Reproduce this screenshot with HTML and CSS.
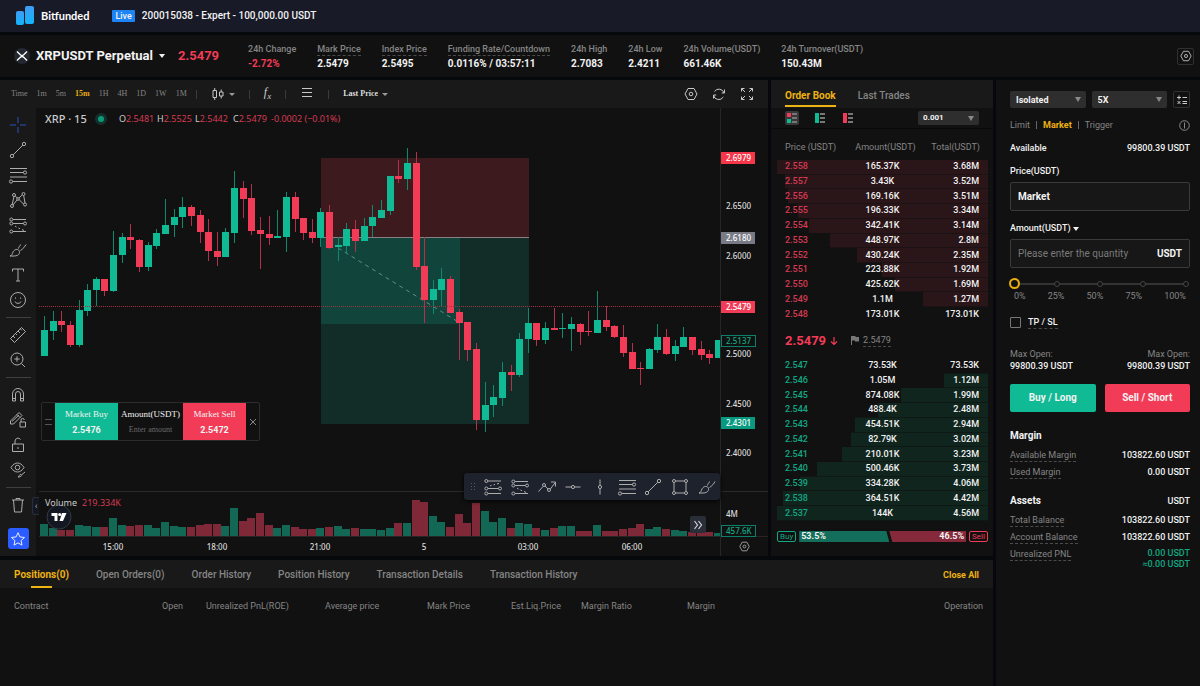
FILE: index.html
```html
<!DOCTYPE html>
<html lang="en">
<head>
    <meta charset="UTF-8">
    <title>Bitfunded - XRPUSDT Perpetual</title>
    <link rel="stylesheet" href="styles.css">
</head>
<body>
    <!-- shared icons -->
    <svg class="sprite" aria-hidden="true">
        <symbol id="i-cross" viewBox="0 0 20 20"><path d="M10 2v6M10 12v6M2 10h6M12 10h6"/></symbol>
        <symbol id="i-trend" viewBox="0 0 20 20"><path d="M5.200 14.800 14.800 5.200"/><circle cx="4" cy="16" r="1.700"/><circle cx="16" cy="4" r="1.700"/></symbol>
        <symbol id="i-fib" viewBox="0 0 20 20"><path d="M2 3.500h17M2 7.500h13.500M2 12h17M4.500 16.500H19"/><circle cx="17" cy="7.500" r="1.600"/><circle cx="3" cy="16.500" r="1.600"/></symbol>
        <symbol id="i-pattern" viewBox="0 0 20 20"><path d="M4.200 14.500 6 6.500M7.300 6l2 2M11 8l3-2.800M15.700 5.500 17 13M15.500 14l-4.500-4.500M9 10l-4 5"/><circle cx="4" cy="16" r="1.500"/><circle cx="6" cy="5" r="1.500"/><circle cx="10" cy="9" r="1.300"/><circle cx="15.500" cy="4" r="1.500"/><circle cx="17" cy="14.500" r="1.500"/></symbol>
        <symbol id="i-forecast" viewBox="0 0 20 20"><path d="M5 4.500h13M5 8.500h10.500M5 16.500h13M7 11l1.500 1M10.500 13l1.500.8M14 14.500l2 1" /><circle cx="3.300" cy="4.500" r="1.500"/><circle cx="3.300" cy="8.500" r="1.500"/><circle cx="3.300" cy="16.500" r="1.500"/><circle cx="17" cy="8.500" r="1.500"/></symbol>
        <symbol id="i-long" viewBox="0 0 20 20"><path d="M5 4h13M5 11.500h10.500M5 16.500h13M7 9l1.500-.7M10.500 8l1.500-.7M14 7l2-.7"/><circle cx="3.300" cy="4" r="1.500"/><circle cx="3.300" cy="11.500" r="1.500"/><circle cx="3.300" cy="16.500" r="1.500"/><circle cx="17" cy="11.500" r="1.500"/></symbol>
        <symbol id="i-brush" viewBox="0 0 20 20"><path d="M2 16c2-.5 2-2 3-4 1-2 3.500-3.500 5.500-2 2 1.700 1 4.300-1 5.300-2 1-5 .7-7.500.7zM10.500 8.500c.3-1.500 1.200-3 2.500-4M12.500 10.500c2.500-1.500 4.500-4 5.500-6"/></symbol>
        <symbol id="i-text" viewBox="0 0 20 20"><path d="M4.500 6.500V4h11v2.500M10 4v12M8 16h4"/></symbol>
        <symbol id="i-smile" viewBox="0 0 20 20"><circle cx="10" cy="10" r="7.500"/><path d="M7 11.500c.6 2.400 5.400 2.400 6 0M7.500 7.500v1.200M12.500 7.500v1.200"/></symbol>
        <symbol id="i-ruler" viewBox="0 0 20 20"><path d="M2.500 13.500 13.500 2.500l4 4L6.500 17.500zM5 11l2 2M7.500 8.500 9 10M10 6l2 2M12.300 3.800l1.500 1.500"/></symbol>
        <symbol id="i-zoom" viewBox="0 0 20 20"><circle cx="9" cy="9" r="6"/><path d="M13.500 13.500 17 17M9 6.300v5.400M6.300 9h5.400"/></symbol>
        <symbol id="i-magnet" viewBox="0 0 20 20"><path d="M4.500 16V9a5.500 5.500 0 0 1 11 0v7h-3V9a2.500 2.500 0 0 0-5 0v7zM4.500 13.500h3M12.500 13.500h3"/></symbol>
        <symbol id="i-pencil" viewBox="0 0 20 20"><path d="M2.500 14v-3L11 2.500l3 3L5.500 14zM9 4.500l3 3M4 11.500l7-6.500M12 12h5.500v5H12zM13 12v-2a1.600 1.600 0 0 1 3.200 0"/></symbol>
        <symbol id="i-lock" viewBox="0 0 20 20"><path d="M4.500 9h11v7.500h-11zM7 9V6a3 3 0 0 1 5.500-1.500M10 12v2"/></symbol>
        <symbol id="i-eye" viewBox="0 0 20 20"><path d="M3 7.500c3.500-6 9.500-6 13 0-3.500 6-9.500 6-13 0z"/><circle cx="9.500" cy="7.500" r="2.300"/><path d="M10 17c1.500-.4 1-2.500 2.800-2.700 1.700.2 1 2.700-2.800 2.700zM14 14.500l3-2.500"/></symbol>
        <symbol id="i-trash" viewBox="0 0 20 20"><path d="M4 5h12M8 5V3.500h4V5M5.500 5l1 12h7l1-12"/></symbol>
        <symbol id="i-star" viewBox="0 0 20 20"><path d="m10 3 2.100 4.700 5.100.6-3.800 3.500 1 5-4.400-2.500-4.400 2.500 1-5-3.800-3.500 5.100-.6z"/></symbol>
        <symbol id="i-zigzag" viewBox="0 0 20 20"><path d="m1.500 14.500 4.500-5M8 9l3 3M13.300 12 18 6M14 5h4.500v4.500"/><circle cx="7" cy="8" r="1.500"/><circle cx="12" cy="13" r="1.500"/></symbol>
        <symbol id="i-hline" viewBox="0 0 20 20"><path d="M2.500 10H8M12 10h5.500"/><circle cx="10" cy="10" r="1.600"/></symbol>
        <symbol id="i-vline" viewBox="0 0 20 20"><path d="M10 2.500V8M10 12v5.500"/><circle cx="10" cy="10" r="1.600"/></symbol>
        <symbol id="i-rect" viewBox="0 0 20 20"><path d="M5.500 4h9M5.500 16h9M4 5.500v9M16 5.500v9"/><circle cx="4" cy="4" r="1.500"/><circle cx="16" cy="4" r="1.500"/><circle cx="4" cy="16" r="1.500"/><circle cx="16" cy="16" r="1.500"/></symbol>
        <symbol id="i-hex" viewBox="0 0 14 14"><path d="M4 1.500h6L13 7l-3 5.500H4L1 7z"/><circle cx="7" cy="7" r="1.800"/></symbol>
        <symbol id="i-refresh" viewBox="0 0 14 14"><path d="M2.500 4.500A5.300 5.300 0 0 1 12 6M1.500 8a5.300 5.300 0 0 0 9.800 2M12.500 2.500V6H9.800M1.500 11.500V8h2.700"/></symbol>
        <symbol id="i-full" viewBox="0 0 14 14"><path d="M1.500 4.500v-3h3M1.500 1.500 5 5M9.500 1.500h3v3M12.500 1.500 9 5M12.500 9.500v3h-3M12.500 12.500 9 9M4.500 12.500h-3v-3M1.500 12.500 5 9"/></symbol>
        <symbol id="i-candles" viewBox="0 0 14 14"><path d="M2 3.500h3.500v7H2zM3.700 1v2.500M3.700 10.500V13M8.500 5H12v4H8.500zM10.200 2.500V5M10.200 9v2.500"/></symbol>
        <symbol id="i-menu" viewBox="0 0 14 14"><path d="M2 1.500h10M2 5.500h10M2 9.500h10"/></symbol>
        <symbol id="i-close" viewBox="0 0 14 14"><path d="m4 4 6 6M10 4l-6 6"/></symbol>
    </svg>

    <header class="topbar">
        <a class="brand" href="#">
            <svg width="20" height="22" viewBox="0 0 20 22">
                <defs>
                    <linearGradient id="logo" x1="0" y1="0" x2="0" y2="1">
                        <stop offset="0" stop-color="#3f9cf5"/>
                        <stop offset="1" stop-color="#12b4fb"/>
                    </linearGradient>
                </defs>
                <rect x="1" y="6" width="8" height="14" rx="2" fill="url(#logo)"/>
                <rect x="10" y="1" width="9" height="18" rx="2" fill="url(#logo)"/>
            </svg>
            Bitfunded
        </a>
        <span class="live">Live</span>
        <span class="account">200015038 - Expert - 100,000.00 USDT</span>
    </header>

    <section class="symbolbar">
        <button class="symbol">
            <svg width="16" height="16" viewBox="0 0 16 16">
                <circle cx="8" cy="8" r="8" fill="#23272f"/>
                <path d="M3 3.500 6.300 6.800q1.700 1.500 3.400 0L13 3.500M3 12.500l3.300-3.300q1.700-1.500 3.400 0L13 12.500" fill="none" stroke="#fff" stroke-width="1.300"/>
            </svg>
            XRPUSDT Perpetual
            <i class="caret"></i>
        </button>
        <strong class="last">2.5479</strong>
        <dl class="stats">
            <div><dt>24h Change</dt><dd class="down">-2.72%</dd></div>
            <div><dt class="hint">Mark Price</dt><dd>2.5479</dd></div>
            <div><dt class="hint">Index Price</dt><dd>2.5495</dd></div>
            <div><dt class="hint">Funding Rate/Countdown</dt><dd>0.0116% / 03:57:11</dd></div>
            <div><dt>24h High</dt><dd>2.7083</dd></div>
            <div><dt>24h Low</dt><dd>2.4211</dd></div>
            <div><dt>24h Volume(USDT)</dt><dd>661.46K</dd></div>
            <div><dt>24h Turnover(USDT)</dt><dd>150.43M</dd></div>
        </dl>
        <button class="box-btn" aria-label="Settings"><svg class="icon12"><use href="#i-hex"/></svg></button>
    </section>

    <main class="layout">
        <section class="chart">
            <div class="chart-bar">
                <span>Time</span>
                <button>1m</button>
                <button>5m</button>
                <button class="active">15m</button>
                <button>1H</button>
                <button>4H</button>
                <button>1D</button>
                <button>1W</button>
                <button>1M</button>
                <i class="sep"></i>
                <button class="tool" aria-label="Chart type"><svg class="icon14"><use href="#i-candles"/></svg><i class="caret small"></i></button>
                <i class="sep"></i>
                <button class="tool fx" aria-label="Indicators"><span>f<sub>x</sub></span></button>
                <i class="sep"></i>
                <button class="tool" aria-label="Menu"><svg class="icon14"><use href="#i-menu"/></svg></button>
                <i class="sep"></i>
                <button class="tool price-type">Last Price <i class="caret small"></i></button>
                <div class="chart-actions">
                    <button aria-label="Chart settings"><svg class="icon14"><use href="#i-hex"/></svg></button>
                    <button aria-label="Refresh"><svg class="icon14"><use href="#i-refresh"/></svg></button>
                    <button aria-label="Full screen"><svg class="icon14"><use href="#i-full"/></svg></button>
                </div>
            </div>
            <div class="chart-body">
                <nav class="tools">
                    <button class="current" aria-label="Cross"><svg><use href="#i-cross"/></svg></button>
                    <button aria-label="Trend line"><svg><use href="#i-trend"/></svg></button>
                    <button aria-label="Fib retracement"><svg><use href="#i-fib"/></svg></button>
                    <button aria-label="Pattern"><svg><use href="#i-pattern"/></svg></button>
                    <button aria-label="Forecast"><svg><use href="#i-forecast"/></svg></button>
                    <button aria-label="Brush"><svg><use href="#i-brush"/></svg></button>
                    <button aria-label="Text"><svg><use href="#i-text"/></svg></button>
                    <button aria-label="Icons"><svg><use href="#i-smile"/></svg></button>
                    <hr>
                    <button aria-label="Measure"><svg><use href="#i-ruler"/></svg></button>
                    <button aria-label="Zoom in"><svg><use href="#i-zoom"/></svg></button>
                    <hr>
                    <button aria-label="Magnet"><svg><use href="#i-magnet"/></svg></button>
                    <button aria-label="Stay in drawing mode"><svg><use href="#i-pencil"/></svg></button>
                    <button aria-label="Lock drawings"><svg><use href="#i-lock"/></svg></button>
                    <button aria-label="Hide drawings"><svg><use href="#i-eye"/></svg></button>
                    <hr>
                    <button aria-label="Remove"><svg><use href="#i-trash"/></svg></button>
                    <button class="fav" aria-label="Favorites"><svg><use href="#i-star"/></svg></button>
                </nav>
                <div class="plot">
                    <svg id="plot" class="plot-svg" viewBox="39 108 729 448"></svg>

                    <div class="legend">
                        <b>XRP · 15</b>
                        <i class="status"></i>
                        <span>O<em>2.5481</em></span>
                        <span>H<em>2.5525</em></span>
                        <span>L<em>2.5442</em></span>
                        <span>C<em>2.5479</em></span>
                        <em>-0.0002 (−0.01%)</em>
                    </div>

                    <div class="quick">
                        <i class="grip"></i>
                        <button class="buy">Market Buy<b>2.5476</b></button>
                        <label>Amount(USDT)<input type="text" placeholder="Enter amount"></label>
                        <button class="sell">Market Sell<b>2.5472</b></button>
                        <button class="close" aria-label="Close"><svg class="icon14"><use href="#i-close"/></svg></button>
                    </div>

                    <a class="tv" href="#" aria-label="TradingView">
                        <svg width="26" height="26" viewBox="0 0 26 26">
                            <circle cx="13" cy="13" r="12" fill="#131722" stroke="#353945"/>
                            <path d="M5.500 9h6v8H8.500v-5h-3zM16 9h4.500L17 17h-3.500z" fill="#fff"/>
                            <circle cx="13.700" cy="10.500" r="1.500" fill="#fff"/>
                        </svg>
                    </a>
                    <div class="vol-legend">Volume <em>219.334K</em></div>
                    <button class="collapse" aria-label="Hide tools">‹</button>
                    <button class="scroll-end" aria-label="Scroll to last bar">
                        <svg width="10" height="10" viewBox="0 0 10 10"><path d="m1.500 1 3 4-3 4M5.500 1l3 4-3 4" fill="none" stroke="#d1d4dc" stroke-width="1.200"/></svg>
                    </button>

                    <div class="floating">
                        <i class="dots"></i>
                        <button aria-label="Long position"><svg><use href="#i-long"/></svg></button>
                        <button aria-label="Short position"><svg><use href="#i-forecast"/></svg></button>
                        <button aria-label="Path"><svg><use href="#i-zigzag"/></svg></button>
                        <button aria-label="Horizontal line"><svg><use href="#i-hline"/></svg></button>
                        <button aria-label="Vertical line"><svg><use href="#i-vline"/></svg></button>
                        <button aria-label="Fib retracement"><svg><use href="#i-fib"/></svg></button>
                        <button aria-label="Trend line"><svg><use href="#i-trend"/></svg></button>
                        <button aria-label="Rectangle"><svg><use href="#i-rect"/></svg></button>
                        <button aria-label="Brush"><svg><use href="#i-brush"/></svg></button>
                    </div>
                </div>
            </div>
        </section>

        <section class="book">
            <div class="book-tabs">
                <button class="active">Order Book</button>
                <button>Last Trades</button>
            </div>
            <div class="book-filter">
                <button class="active" aria-label="Both sides"><svg width="12" height="12" viewBox="0 0 12 12"><path fill="#f23c57" d="M1 1h4v4H1z"/><path fill="#0fba94" d="M1 7h4v4H1z"/><path fill="#777" d="M6 1h5v2H6zM6 5h5v2H6zM6 9h5v2H6z"/></svg></button>
                <button aria-label="Bids only"><svg width="12" height="12" viewBox="0 0 12 12"><path fill="#0fba94" d="M1 1h4v10H1z"/><path fill="#777" d="M6 1h5v2H6zM6 5h5v2H6zM6 9h5v2H6z"/></svg></button>
                <button aria-label="Asks only"><svg width="12" height="12" viewBox="0 0 12 12"><path fill="#f23c57" d="M1 1h4v10H1z"/><path fill="#777" d="M6 1h5v2H6zM6 5h5v2H6zM6 9h5v2H6z"/></svg></button>
                <select class="select" aria-label="Price step"><option>0.001</option></select>
            </div>
            <table class="depth asks">
                <thead>
                    <tr><th>Price (USDT)</th><th>Amount(USDT)</th><th>Total(USDT)</th></tr>
                </thead>
                <tbody id="asks"></tbody>
            </table>
            <div class="mid">
                <strong>2.5479</strong>
                <svg width="8" height="10" viewBox="0 0 8 10"><path d="M4 1v7.500M1 5.500l3 3 3-3" fill="none" stroke="#f23c57" stroke-width="1.200"/></svg>
                <svg class="flag" width="8" height="9" viewBox="0 0 8 9"><path d="M0 0h4.500v1H8v4.500H4v-1H1V9H0z" fill="#777"/></svg>
                <span class="hint">2.5479</span>
            </div>
            <table class="depth bids">
                <tbody id="bids"></tbody>
            </table>
            <div class="ratio">
                <span class="tag up">Buy</span>
                <div class="ratio-bar">
                    <b class="ratio-buy">53.5%</b>
                    <b class="ratio-sell">46.5%</b>
                </div>
                <span class="tag down">Sell</span>
            </div>
        </section>

        <aside class="trade">
            <div class="trade-mode">
                <select class="select" aria-label="Margin mode"><option>Isolated</option></select>
                <select class="select" aria-label="Leverage"><option>5X</option></select>
                <button class="box-btn" aria-label="Calculator"><svg width="10" height="10" viewBox="0 0 10 10"><path d="M0 2.500h4M2 .5v4M5.500 2.500H10M.5 6l3 3M3.500 6l-3 3M5.500 6.500H10M5.500 8.500H10" fill="none" stroke="#ccc"/></svg></button>
            </div>
            <div class="order-type">
                <button>Limit</button><i></i><button class="active">Market</button><i></i><button>Trigger</button>
                <svg width="11" height="11" viewBox="0 0 11 11"><circle cx="5.500" cy="5.500" r="4.800" fill="none" stroke="#888"/><path d="M5.500 2.500v6" stroke="#888"/></svg>
            </div>
            <div class="line available"><b>Available</b><b>99800.39 USDT</b></div>

            <label class="field-label" for="price">Price(USDT)</label>
            <div class="field"><input id="price" class="market" type="text" value="Market"></div>

            <label class="field-label" for="amount">Amount(USDT) <i class="caret"></i></label>
            <div class="field"><input id="amount" type="text" placeholder="Please enter the quantity"><b>USDT</b></div>

            <div class="slider">
                <div class="ticks"><i></i><i></i><i></i><i></i><i></i></div>
                <input type="range" min="0" max="100" value="0" aria-label="Amount percent">
            </div>
            <div class="scale"><span>0%</span><span>25%</span><span>50%</span><span>75%</span><span>100%</span></div>

            <label class="tpsl"><input type="checkbox"><span class="hint">TP / SL</span></label>

            <div class="line max"><span>Max Open:<b>99800.39 USDT</b></span><span>Max Open:<b>99800.39 USDT</b></span></div>
            <div class="submit">
                <button class="buy">Buy / Long</button>
                <button class="sell">Sell / Short</button>
            </div>

            <div class="line title"><h2>Margin</h2></div>
            <div class="line"><span class="hint">Available Margin</span><b>103822.60 USDT</b></div>
            <div class="line"><span class="hint">Used Margin</span><b>0.00 USDT</b></div>

            <div class="line title"><h2>Assets</h2><b>USDT</b></div>
            <div class="line"><span class="hint">Total Balance</span><b>103822.60 USDT</b></div>
            <div class="line"><span class="hint">Account Balance</span><b>103822.60 USDT</b></div>
            <div class="line pnl"><span class="hint">Unrealized PNL</span><b class="up">0.00 USDT<br>≈0.00 USDT</b></div>
        </aside>

        <section class="positions">
            <div class="pos-tabs">
                <button class="active">Positions(0)</button>
                <button>Open Orders(0)</button>
                <button>Order History</button>
                <button>Position History</button>
                <button>Transaction Details</button>
                <button>Transaction History</button>
                <button class="close-all">Close All</button>
            </div>
            <table class="pos-table">
                <thead>
                    <tr>
                        <th>Contract</th>
                        <th>Open</th>
                        <th>Unrealized PnL(ROE)</th>
                        <th>Average price</th>
                        <th>Mark Price</th>
                        <th>Est.Liq.Price</th>
                        <th>Margin Ratio</th>
                        <th>Margin</th>
                        <th>Operation</th>
                    </tr>
                </thead>
            </table>
        </section>
    </main>

    <script src="chart.js"></script>
</body>
</html>
```

FILE: styles.css
```css
* {
    box-sizing: border-box;
}
body {
    margin: 0;
    min-height: 100vh;
    display: flex;
    flex-direction: column;
    gap: 3px;
    background: #07080c;
    color: #f2f2f2;
    font-family: Roboto, "Liberation Sans", sans-serif;
    font-size: 9px;
    line-height: 12px;
}
button, input, select {
    font: inherit;
    color: inherit;
    background: none;
    border: 0;
    padding: 0;
    margin: 0;
}
button {
    cursor: pointer;
    white-space: nowrap;
}
svg {
    display: block;
}
em {
    font-style: normal;
}
.sprite {
    position: absolute;
    width: 0;
    height: 0;
}
.icon12, .icon14, .tools svg, .floating svg {
    fill: none;
    stroke: #c8c8c8;
}
.icon12 {
    width: 12px;
    height: 12px;
}
.icon14 {
    width: 14px;
    height: 14px;
}
.up {
    color: #12a883;
}
.down {
    color: #f23c57;
}
.hint {
    border-bottom: 1px dashed #4a4a4a;
}
.caret {
    display: inline-block;
    border: 3px solid transparent;
    border-top: 4px solid currentColor;
    border-bottom: 0;
}
.caret.small {
    border-width: 3px 3px 0;
    color: #999;
}
.box-btn {
    display: grid;
    place-items: center;
    width: 17px;
    height: 17px;
    border: 1px solid #303030;
    border-radius: 2px;
}

/* header */
.topbar {
    height: 32px;
    flex: none;
    display: flex;
    align-items: center;
    padding: 0 15px;
    background: #181a28;
    font-size: 10px;
    font-weight: 500;
}
.brand {
    display: flex;
    align-items: center;
    gap: 6px;
    margin-right: 23px;
    color: #fff;
    font-family: Lato, sans-serif;
    font-size: 11px;
    font-weight: 700;
    text-decoration: none;
}
.live {
    padding: 0 3px;
    margin-right: 7px;
    background: #1c84f5;
    border-radius: 1px;
    font-size: 9px;
}
.symbolbar {
    height: 42px;
    flex: none;
    display: flex;
    align-items: center;
    padding: 0 6px 0 14px;
    background: #111;
}
.symbol {
    display: flex;
    align-items: center;
    gap: 6px;
    font-size: 13px;
    font-weight: 700;
}
.last {
    margin: 0 29px 0 13px;
    color: #f23c57;
    font-size: 13px;
}
.stats {
    display: flex;
    gap: 21px;
    flex: 1;
    margin: 0;
    white-space: nowrap;
}
.stats dt {
    height: 13px;
    color: #858585;
    font-weight: 500;
}
.stats dd {
    margin: 2px 0 0;
    font-size: 10px;
    font-weight: 700;
}

.layout {
    flex: 1;
    display: grid;
    grid-template: auto 1fr / 1fr 222px 204px;
    gap: 4px 3px;
}

/* chart */
.chart {
    background: #111;
    min-width: 0;
}
.chart-bar {
    display: flex;
    align-items: center;
    gap: 9px;
    height: 28px;
    padding: 0 14px 0 11px;
    background: #191919;
    color: #858585;
    font-family: "Liberation Serif", serif;
    font-size: 8px;
}
.chart-bar .active {
    color: #e9ae10;
    font-weight: 700;
}
.sep {
    width: 1px;
    height: 9px;
    background: #3a3a3a;
}
.tool {
    display: flex;
    align-items: center;
    gap: 4px;
    margin: 0 5px;
}
.fx {
    color: #ccc;
    font-size: 12px;
    font-style: italic;
}
.fx sub {
    font-size: 9px;
}
.price-type {
    color: #ddd;
    font-weight: 700;
}
.chart-actions {
    display: flex;
    gap: 14px;
    margin-left: auto;
}
.chart-body {
    display: flex;
}
.tools {
    display: flex;
    flex-direction: column;
    align-items: center;
    width: 36px;
    margin-right: 3px;
    padding-top: 4px;
    background: #191919;
}
.tools button {
    width: 28px;
    height: 25px;
    display: grid;
    place-items: center;
}
.tools svg, .floating svg {
    width: 20px;
    height: 20px;
    stroke: #adadad;
}
.tools hr {
    width: 25px;
    height: 1px;
    margin: 5px 0 4px;
    border: 0;
    background: #3f3f42;
}
.tools .current svg {
    stroke: #2c4fc4;
}
.tools .fav {
    width: 21px;
    height: 21px;
    margin-top: 11px;
    border-radius: 3px;
    background: #2b5cff;
}
.tools .fav svg {
    width: 18px;
    stroke: #fff;
}
.plot {
    position: relative;
    flex: 1;
    min-width: 0;
}
.plot-svg {
    width: 100%;
    height: 448px;
    font-family: "Noto Sans", sans-serif;
    font-size: 8px;
    font-weight: 500;
    fill: #dcdcdc;
}
.legend, .vol-legend {
    position: absolute;
    left: 6px;
    display: flex;
    align-items: center;
    font-family: "Noto Sans", sans-serif;
    font-size: 9px;
    color: #ccc;
    white-space: nowrap;
}
.legend {
    top: 5px;
}
.legend b {
    font-size: 11px;
    font-weight: 500;
    width: 50px;
}
.legend span {
    width: 38px;
}
.legend em, .vol-legend em {
    color: #d53a52;
}
.status {
    width: 12px;
    height: 12px;
    margin-right: 12px;
    border: 3px solid #14302a;
    border-radius: 50%;
    background: #0c9a7b;
}
.vol-legend {
    top: 389px;
    gap: 5px;
}
.quick {
    position: absolute;
    left: 2px;
    top: 294px;
    display: flex;
    height: 39px;
    border: 1px solid #2c2c2c;
    border-radius: 2px;
    background: #111;
    font-family: "Liberation Serif", serif;
}
.quick > * {
    display: flex;
    flex-direction: column;
    align-items: center;
    justify-content: center;
    gap: 4px;
    width: 63px;
    text-align: center;
}
.quick b {
    font-family: Roboto, sans-serif;
}
.quick label {
    width: 65px;
}
.quick input {
    width: 100%;
    height: 12px;
    text-align: center;
    font-size: 8px;
}
.quick ::placeholder {
    color: #6a6a6a;
}
.quick .grip, .quick .close {
    width: 13px;
}
.grip::before {
    content: "";
    width: 7px;
    height: 4px;
    border: solid #555;
    border-width: 1px 0;
}
.quick .close svg {
    stroke: #888;
}
.buy {
    background: #0fba94;
}
.sell {
    background: #f23c57;
}
.tv {
    position: absolute;
    left: 7px;
    top: 396px;
}
.collapse {
    position: absolute;
    left: -7px;
    top: 389px;
    width: 7px;
    height: 18px;
    border: 1px solid #2a2e39;
    border-right: 0;
    border-radius: 3px 0 0 3px;
    background: #131722;
    color: #aaa;
}
.scroll-end {
    position: absolute;
    right: 62px;
    top: 408px;
    width: 16px;
    height: 17px;
    display: grid;
    place-items: center;
    border-radius: 2px;
    background: #2a2e39;
}
.floating {
    position: absolute;
    right: 48px;
    top: 365px;
    width: 256px;
    height: 27px;
    display: flex;
    align-items: center;
    border-radius: 3px;
    background: #1e222d;
    box-shadow: 0 1px 4px #000;
}
.floating button {
    flex: 1;
    display: grid;
    place-items: center;
}
.dots {
    width: 6px;
    height: 10px;
    margin: 0 4px 0 6px;
    background: radial-gradient(circle, #555a66 1px, transparent 1px) 0 0 / 3px 3px;
}

/* order book */
.book {
    padding-bottom: 14px;
    background: #111;
}
.book-tabs {
    display: flex;
    gap: 22px;
    height: 28px;
    padding: 5px 14px 0;
    background: #191919;
    color: #858585;
    font-size: 10px;
    font-weight: 500;
}
.book-tabs button {
    height: 22px;
    padding-top: 2px;
    border-bottom: 2px solid transparent;
}
.book-tabs .active, .pos-tabs .active {
    color: #eeb211;
    border-color: #eeb211;
    font-weight: 700;
}
.book-filter {
    display: flex;
    align-items: center;
    gap: 14px;
    height: 21px;
    padding: 0 14px;
    border-bottom: 1px solid #090909;
}
.book-filter button {
    padding: 1px;
}
.book-filter .active {
    background: #383838;
    border-radius: 2px;
}
.select {
    appearance: none;
    height: 17px;
    padding: 0 6px;
    border-radius: 2px;
    background: #2e2e2e url("data:image/svg+xml,%3Csvg xmlns='http://www.w3.org/2000/svg' width='6' height='5'%3E%3Cpath d='M0 0h6L3 5z' fill='%23888'/%3E%3C/svg%3E") no-repeat right 5px center;
    font-weight: 700;
}
.book-filter .select {
    width: 61px;
    height: 14px;
    margin-left: auto;
    padding: 0 5px;
    font-size: 8px;
}
.depth {
    width: 211px;
    margin: 6px 0 0 6px;
    table-layout: fixed;
    border-collapse: collapse;
    font-weight: 500;
}
.depth.asks {
    height: 187px;
}
.depth.bids {
    height: 162px;
    margin-top: 0;
}
.depth th {
    height: 25px;
    padding: 0 8px 1px;
    color: #858585;
    font-weight: 400;
    white-space: nowrap;
}
.depth td {
    padding: 0 9px;
    line-height: 11px;
    text-align: center;
    border-bottom: 1px solid rgba(17, 17, 17, 0.6);
}
.depth th:first-child, .depth td:first-child {
    padding-left: 8px;
    text-align: left;
}
.depth th:last-child, .depth td:last-child {
    text-align: right;
}
.asks tbody tr {
    background: linear-gradient(to left, #2a1519 var(--depth), transparent var(--depth));
}
.bids tbody tr {
    background: linear-gradient(to left, #11251f var(--depth), transparent var(--depth));
}
.asks td:first-child {
    color: #d53a52;
}
.bids td:first-child {
    color: #12a883;
}
.mid {
    display: flex;
    align-items: center;
    gap: 4px;
    height: 37px;
    padding: 0 14px;
    color: #858585;
}
.mid strong {
    color: #f23c57;
    font-size: 13px;
}
.mid .flag {
    margin-left: 9px;
}
.ratio {
    display: flex;
    align-items: center;
    gap: 3px;
    margin: 10px 5px 0 6px;
}
.tag {
    padding: 0 2px;
    border: 1px solid;
    border-radius: 2px;
    font-size: 8px;
    line-height: 9px;
}
.ratio-bar {
    flex: 1;
    display: flex;
    line-height: 11px;
}
.ratio-buy {
    width: 54%;
    padding-left: 2px;
    background: #136f5b;
    clip-path: polygon(0 0, calc(100% - 3px) 0, 100% 100%, 0 100%);
}
.ratio-sell {
    flex: 1;
    padding-right: 2px;
    background: #86293a;
    text-align: right;
    clip-path: polygon(0 0, 100% 0, 100% 100%, 3px 100%);
}

/* order form */
.trade {
    grid-row: span 2;
    padding: 11px 10px 0 14px;
    background: #111;
}
.trade-mode {
    display: flex;
    gap: 6px;
}
.trade-mode .select {
    flex: 1;
    min-width: 0;
}
.order-type {
    display: flex;
    align-items: center;
    gap: 6px;
    height: 34px;
    color: #858585;
}
.order-type i {
    width: 1px;
    height: 8px;
    background: #666;
}
.order-type .active {
    color: #eeb211;
    font-weight: 700;
}
.order-type svg {
    margin-left: auto;
}
.line {
    display: flex;
    justify-content: space-between;
    height: 17px;
    color: #858585;
}
.line b {
    color: #f2f2f2;
    font-weight: 500;
    text-align: right;
}
.line .hint {
    height: 13px;
}
.line b.up {
    color: #12a883;
    line-height: 11px;
}
.available {
    height: 23px;
}
.field-label {
    display: block;
    height: 17px;
    font-weight: 500;
}
.field {
    display: flex;
    align-items: center;
    height: 29px;
    margin-bottom: 11px;
    padding: 0 7px;
    border: 1px solid #3a3a3a;
    border-radius: 2px;
    background: #171717;
    font-size: 10px;
}
.field input {
    flex: 1;
    min-width: 0;
    height: 100%;
    outline: 0;
}
.field ::placeholder {
    color: #7a7a7a;
}
.field .market {
    font-weight: 700;
}
.slider {
    display: grid;
    align-items: center;
    height: 11px;
    margin: -1px 0 0 -1px;
}
.slider > * {
    grid-area: 1 / 1;
}
.ticks {
    display: flex;
    justify-content: space-between;
    margin: 0 1px 0 2px;
    background: linear-gradient(#333, #333) center / 100% 2px no-repeat;
}
.ticks i {
    width: 6px;
    height: 6px;
    border: 1px solid #444;
    border-radius: 50%;
    background: #111;
}
.slider input {
    appearance: none;
    width: 100%;
    height: 11px;
}
.slider input::-webkit-slider-thumb {
    appearance: none;
    width: 11px;
    height: 11px;
    border: 2px solid #e9ae10;
    border-radius: 50%;
    background: #111;
}
.scale {
    display: flex;
    justify-content: space-between;
    margin: 1px 4px 14px;
    color: #858585;
}
.tpsl {
    display: flex;
    align-items: center;
    gap: 7px;
    margin-bottom: 19px;
    font-weight: 500;
}
.tpsl input {
    appearance: none;
    width: 11px;
    height: 11px;
    border: 1px solid #777;
    border-radius: 1px;
}
.max {
    height: 36px;
}
.max span:last-child {
    text-align: right;
}
.max b {
    display: block;
}
.submit {
    display: flex;
    gap: 9px;
    margin-bottom: 18px;
}
.submit button {
    flex: 1;
    height: 28px;
    border-radius: 2px;
    font-size: 10px;
    font-weight: 700;
}
.title {
    height: 19px;
}
.line + .title {
    margin-top: 12px;
}
.title h2 {
    margin: 0;
    color: #f2f2f2;
    font-size: 10px;
}

/* positions */
.positions {
    grid-column: span 2;
    background: #111;
}
.pos-tabs {
    display: flex;
    gap: 27px;
    height: 28px;
    padding: 0 14px;
    background: #191919;
    color: #858585;
    font-weight: 500;
}
.pos-tabs button {
    position: relative;
    padding-top: 1px;
    font-size: 10px;
}
.pos-tabs .active::after {
    content: "";
    position: absolute;
    left: 17px;
    right: 17px;
    bottom: 0;
    height: 2px;
    background: #eeb211;
}
.pos-tabs .close-all {
    margin-left: auto;
    color: #eeb211;
    font-size: 9px;
    font-weight: 700;
}
.pos-table {
    width: 100%;
    table-layout: fixed;
    border-collapse: collapse;
}
.pos-table th {
    height: 35px;
    padding: 0;
    color: #858585;
    font-weight: 400;
    text-align: left;
    white-space: nowrap;
}
.pos-table th:nth-child(1) {
    width: 162px;
    padding-left: 14px;
}
.pos-table th:nth-child(2) {
    width: 44px;
}
.pos-table th:nth-child(3) {
    width: 119px;
}
.pos-table th:nth-child(4) {
    width: 102px;
}
.pos-table th:nth-child(5) {
    width: 84px;
}
.pos-table th:nth-child(6) {
    width: 70px;
}
.pos-table th:nth-child(7) {
    width: 106px;
}
.pos-table th:last-child {
    padding-right: 10px;
    text-align: right;
}
```

FILE: chart.js
```js
// candle: [body top, body bottom, wick top, wick bottom, volume, rising]
const candles = [
    [330, 356, 316, 356, 12, 1], [321, 331, 311, 340, 8, 1], [321, 325, 311, 332, 6, 0], [325, 345, 321, 347, 6, 0],
    [310, 345, 300, 347, 11, 1], [290, 311, 284, 316, 10, 1], [279, 290, 277, 306, 9, 1], [279, 291, 279, 296, 9, 0],
    [255, 291, 231, 292, 18, 1], [237, 255, 233, 263, 11, 1], [237, 240, 224, 249, 10, 0], [240, 267, 239, 272, 11, 0],
    [245, 267, 242, 271, 11, 1], [233, 246, 229, 249, 8, 1], [225, 234, 199, 234, 14, 1], [217, 225, 209, 237, 10, 1],
    [207, 217, 197, 228, 9, 1], [207, 216, 205, 226, 9, 0], [215, 232, 210, 243, 11, 0], [232, 251, 219, 261, 12, 0],
    [251, 257, 232, 266, 12, 0], [232, 257, 228, 257, 10, 1], [188, 233, 171, 243, 28, 1], [188, 199, 181, 218, 15, 0],
    [198, 231, 184, 235, 18, 0], [230, 234, 217, 269, 23, 0], [234, 238, 216, 245, 11, 0], [236, 238, 210, 238, 8, 1],
    [197, 237, 192, 252, 11, 1], [197, 219, 192, 232, 9, 0], [218, 233, 218, 240, 7, 0], [232, 238, 219, 243, 7, 0],
    [212, 238, 208, 247, 8, 1], [212, 248, 205, 249, 9, 0], [245, 247, 237, 261, 10, 1], [229, 246, 223, 254, 7, 1],
    [229, 241, 220, 252, 8, 0], [226, 241, 218, 241, 7, 1], [217, 226, 205, 237, 7, 1], [210, 218, 200, 218, 6, 1],
    [176, 211, 176, 215, 8, 1], [176, 179, 160, 183, 13, 0], [163, 179, 148, 190, 13, 1], [163, 267, 152, 270, 36, 0],
    [266, 300, 237, 323, 34, 0], [289, 300, 280, 314, 20, 1], [279, 290, 268, 306, 14, 1], [279, 313, 276, 313, 9, 0],
    [312, 323, 309, 360, 22, 0], [322, 350, 322, 361, 13, 0], [349, 420, 343, 430, 33, 0], [405, 420, 382, 432, 25, 1],
    [397, 405, 385, 417, 14, 1], [372, 398, 362, 406, 18, 1], [372, 375, 365, 391, 8, 0], [339, 375, 333, 377, 13, 1],
    [323, 339, 308, 353, 12, 1], [323, 340, 323, 346, 8, 0], [328, 340, 322, 344, 6, 1], [328, 330, 308, 330, 8, 0],
    [328, 329, 313, 338, 10, 1], [324, 329, 317, 351, 10, 1], [324, 332, 323, 345, 5, 0], [331, 332, 311, 336, 5, 0],
    [320, 333, 291, 333, 11, 1], [320, 327, 306, 331, 5, 0], [326, 337, 325, 338, 5, 0], [337, 353, 325, 357, 7, 0],
    [352, 369, 343, 369, 8, 0], [368, 369, 362, 385, 12, 0], [349, 369, 348, 369, 7, 1], [337, 350, 324, 353, 9, 1],
    [337, 354, 329, 355, 7, 0], [346, 354, 340, 361, 6, 1], [337, 347, 327, 347, 5, 1], [337, 350, 337, 355, 4, 0],
    [349, 355, 341, 360, 4, 0], [354, 358, 350, 364, 4, 0], [340, 358, 340, 358, 3, 1]
];

const rect = (x, y, w, h, fill) => `<rect x="${x}" y="${y}" width="${w}" height="${h}" fill="${fill}"/>`;
const text = (x, y, label, extra = '') => `<text x="${x}" y="${y}" ${extra}>${label}</text>`;

let out = '';

// short position
out += rect(321, 158, 208, 80, '#3c1a1d');
out += rect(321, 238, 208, 186, '#122d28');
out += rect(321, 238, 139, 86, '#11453b');
out += rect(321, 237, 208, 1, '#8a7f82');
out += '<path d="M338 248 460 323" stroke="#5f8f85" stroke-dasharray="4 4" fill="none"/>';

candles.forEach(([top, bottom, high, low, volume, rising], i) => {
    const x = Math.round(44 + i * 8.64);
    const w = x + 4 > 721 ? 5 : 7;
    const color = rising ? '#0fba94' : '#f23c57';
    out += rect(x, high, 1, low - high, rising ? '#0b8a6f' : '#b5304a');
    out += rect(x - 3, top, w, bottom - top, color);
    out += rect(x - 4, 536 - volume, w + 1, volume, rising ? '#126855' : '#7e2838');
});

out += '<path d="M39 306.5H721" stroke="#a03042" stroke-dasharray="1 1"/>';

// axes
out += rect(39, 491, 729, 1, '#2a2a2a');
out += rect(39, 536, 729, 1, '#262626');
out += rect(720, 108, 1, 448, '#262626');
[['2.6500', 206], ['2.6000', 256], ['2.5000', 354], ['2.4500', 404], ['2.4000', 453], ['4M', 514]].forEach(([label, y]) => {
    out += text(726, y + 3, label);
});
[['2.6979', 158, '#f7364a'], ['2.6180', 238, '#787b86'], ['2.5479', 307, '#f23c57'], ['2.4301', 423, '#089981']].forEach(([label, y, fill]) => {
    out += rect(721, y - 6, 34, 12, fill);
    out += text(726, y + 3, label, 'fill="#fff"');
});
[['2.5137', 341], ['457.6K', 531]].forEach(([label, y]) => {
    out += `<rect x="721.5" y="${y - 5.5}" width="34" height="11" fill="#111" stroke="#0c8068"/>`;
    out += text(726, y + 3, label, 'fill="#12a883"');
});
[['15:00', 113], ['18:00', 217], ['21:00', 320], ['5', 424], ['03:00', 528], ['06:00', 632]].forEach(([label, x]) => {
    out += text(x, 550, label, 'text-anchor="middle"');
});
out += '<use href="#i-hex" x="739" y="541" width="11" height="11" fill="none" stroke="#bbb"/>';

document.getElementById('plot').innerHTML = out;

// order book: [price, amount, total, depth %]
const asks = [
    ['2.558', '165.37K', '3.68M', 100], ['2.557', '3.43K', '3.52M', 96], ['2.556', '169.16K', '3.51M', 95],
    ['2.555', '196.33K', '3.34M', 90], ['2.554', '342.41K', '3.14M', 85], ['2.553', '448.97K', '2.8M', 75],
    ['2.552', '430.24K', '2.35M', 62], ['2.551', '223.88K', '1.92M', 50], ['2.550', '425.62K', '1.69M', 44],
    ['2.549', '1.1M', '1.27M', 31], ['2.548', '173.01K', '173.01K', 0]
];
const bids = [
    ['2.547', '73.53K', '73.53K', 0], ['2.546', '1.05M', '1.12M', 21], ['2.545', '874.08K', '1.99M', 41],
    ['2.544', '488.4K', '2.48M', 52], ['2.543', '454.51K', '2.94M', 63], ['2.542', '82.79K', '3.02M', 65],
    ['2.541', '210.01K', '3.23M', 69], ['2.540', '500.46K', '3.73M', 81], ['2.539', '334.28K', '4.06M', 89],
    ['2.538', '364.51K', '4.42M', 97], ['2.537', '144K', '4.56M', 100]
];

function fillBook(id, rows) {
    document.getElementById(id).innerHTML = rows.map(([price, amount, total, depth]) =>
        `<tr style="--depth: ${depth}%"><td>${price}</td><td>${amount}</td><td>${total}</td></tr>`
    ).join('');
}

fillBook('asks', asks);
fillBook('bids', bids);
```
